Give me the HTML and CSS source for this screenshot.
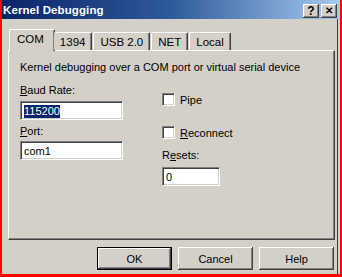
FILE: index.html
```html
<!DOCTYPE html>
<html lang="en">
<head>
    <meta charset="UTF-8">
    <title>Kernel Debugging</title>
    <link rel="stylesheet" href="styles.css">
</head>
<body>
    <div class="dialog">
        <div class="titlebar">
            <span class="title">Kernel Debugging</span>
            <div class="caption-btns">
                <span class="cap-btn">?</span>
                <span class="cap-btn cap-close">&#x2715;</span>
            </div>
        </div>

        <div class="tabs">
            <span class="tab active">COM</span>
            <span class="tab">1394</span>
            <span class="tab">USB 2.0</span>
            <span class="tab">NET</span>
            <span class="tab">Local</span>
        </div>

        <div class="panel">
            <p class="desc">Kernel debugging over a COM port or virtual serial device</p>
            <div class="fields">
                <div class="col">
                    <label class="lbl"><u>B</u>aud Rate:</label>
                    <div class="edit"><span class="sel">115200</span></div>
                    <label class="lbl lbl-port"><u>P</u>ort:</label>
                    <div class="edit">com1</div>
                </div>
                <div class="col col-right">
                    <div class="check"><span class="box"></span><span>Pipe</span></div>
                    <div class="check check-re"><span class="box"></span><span><u>R</u>econnect</span></div>
                    <label class="lbl lbl-resets">R<u>e</u>sets:</label>
                    <div class="edit edit-small">0</div>
                </div>
            </div>
        </div>

        <div class="actions">
            <button class="btn btn-default">OK</button>
            <button class="btn">Cancel</button>
            <button class="btn">Help</button>
        </div>
    </div>
</body>
</html>
```

FILE: styles.css
```css
* {
    margin: 0;
    padding: 0;
    box-sizing: border-box;
}

body {
    width: 342px;
    height: 277px;
    background: #ff0000;
    font-family: 'Liberation Sans', Arial, sans-serif;
    font-size: 11px;
    color: #000;
    overflow: hidden;
}

.dialog {
    margin: 0 2px 0 2px;
    width: 338px;
    height: 274px;
    background: #d4d0c8;
    box-shadow: inset -2px 0 #d4d0c8, inset -3px 0 #404040;
}

.titlebar {
    height: 19px;
    display: flex;
    align-items: center;
    justify-content: space-between;
    padding: 0 3px 0 1px;
    background: linear-gradient(90deg, #0a246a 0%, #2d5a9a 50%, #a6caf0 100%);
}

.title {
    color: #fff;
    font-weight: bold;
    font-size: 11.5px;
    letter-spacing: 0.1px;
}

.caption-btns {
    display: flex;
    gap: 2px;
    margin-top: 3px;
}

.cap-btn {
    width: 16px;
    height: 14px;
    background: #d4d0c8;
    box-shadow: inset -1px -1px #404040, inset 1px 1px #fff, inset -2px -2px #808080;
    display: flex;
    align-items: center;
    justify-content: center;
    font-weight: bold;
    font-size: 12px;
    line-height: 1;
}

.cap-close {
    font-size: 10px;
}

.tabs {
    display: flex;
    align-items: flex-end;
    height: 31px;
    padding-left: 9px;
    position: relative;
    z-index: 1;
}

.tab {
    height: 18px;
    padding: 0 6px;
    display: flex;
    align-items: center;
    background: #d4d0c8;
    border-top: 1px solid #fff;
    border-left: 1px solid #fff;
    border-right: 1px solid #404040;
    border-top-left-radius: 2px;
    border-top-right-radius: 2px;
    box-shadow: inset -1px 0 #808080;
    margin-right: 1px;
    font-size: 11.5px;
}

.tab.active {
    height: 22px;
    margin: 0 -1px -1px -2px;
    padding: 0 10px 3px 7px;
}

.tab.active + .tab {
    border-left: none;
}

.panel {
    margin: 0 5px 0 6px;
    height: 190px;
    border-top: 1px solid #fff;
    border-left: 1px solid #fff;
    border-right: 1px solid #404040;
    border-bottom: 1px solid #404040;
    box-shadow: inset -1px -1px #808080;
    padding: 10px 11px 0 11px;
}

.desc {
    line-height: 13px;
}

.fields {
    display: flex;
    gap: 39px;
    margin-top: 10px;
}

.col {
    display: flex;
    flex-direction: column;
    width: 103px;
}

.lbl {
    line-height: 13px;
    margin-bottom: 4px;
}

.lbl-port {
    margin-top: 5px;
    margin-bottom: 3px;
}

.edit {
    height: 19px;
    background: #fff;
    border-top: 1px solid #808080;
    border-left: 1px solid #808080;
    border-bottom: 1px solid #fff;
    border-right: 1px solid #fff;
    box-shadow: inset 1px 1px #404040, inset -1px -1px #d4d0c8;
    padding: 2px 3px 0 3px;
    line-height: 14px;
}

.sel {
    background: #0a246a;
    color: #fff;
    display: inline-block;
    line-height: 13px;
}

.col-right {
    width: 120px;
    padding-top: 9px;
}

.check {
    display: flex;
    align-items: center;
    gap: 5px;
    height: 13px;
}

.check-re {
    margin-top: 20px;
}

.box {
    width: 13px;
    height: 13px;
    background: #fff;
    border-top: 1px solid #808080;
    border-left: 1px solid #808080;
    border-bottom: 1px solid #fff;
    border-right: 1px solid #fff;
    box-shadow: inset 1px 1px #404040, inset -1px -1px #d4d0c8;
}

.lbl-resets {
    margin-top: 10px;
    margin-bottom: 5px;
}

.edit-small {
    width: 58px;
}

.actions {
    display: flex;
    justify-content: flex-end;
    gap: 6px;
    padding: 7px 6px 0 0;
}

.btn {
    width: 75px;
    height: 23px;
    font-family: inherit;
    font-size: 11px;
    background: #d4d0c8;
    border: none;
    box-shadow: inset -1px -1px #404040, inset 1px 1px #fff, inset -2px -2px #808080;
}

.btn-default {
    box-shadow: inset 0 0 0 1px #000, inset -2px -2px #404040, inset 2px 2px #fff, inset -3px -3px #808080;
}
```
